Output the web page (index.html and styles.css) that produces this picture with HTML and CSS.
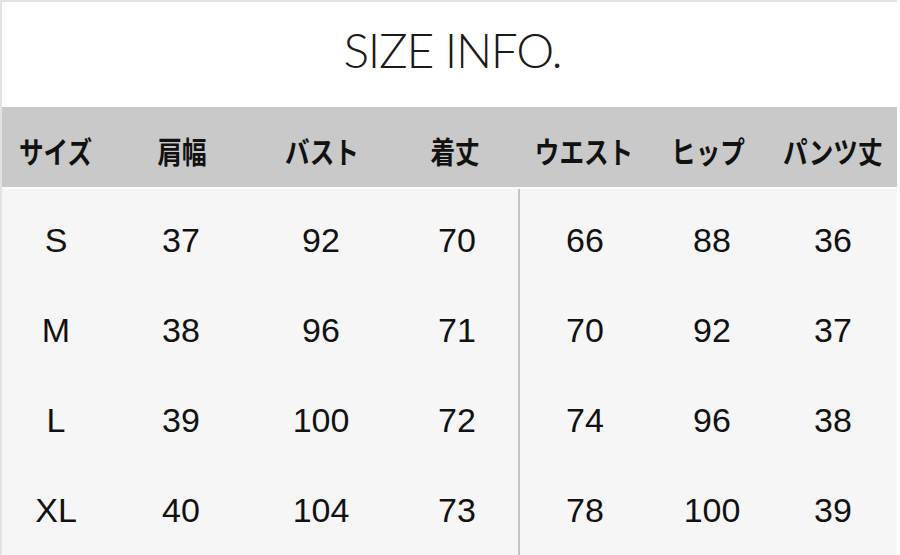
FILE: index.html
```html
<!DOCTYPE html>
<html lang="ja">
<head>
<meta charset="utf-8">
<title>SIZE INFO.</title>
<link rel="stylesheet" href="styles.css">
</head>
<body>
<div class="sheet">
  <div class="title"><h1>SIZE INFO.</h1></div>
  <div class="row head">
    <div class="cell"><span>サイズ</span></div>
    <div class="cell"><span>肩幅</span></div>
    <div class="cell"><span>バスト</span></div>
    <div class="cell"><span>着丈</span></div>
    <div class="cell"><span>ウエスト</span></div>
    <div class="cell"><span>ヒップ</span></div>
    <div class="cell"><span>パンツ丈</span></div>
  </div>
  <div class="body">
    <div class="row data">
      <div class="cell">S</div><div class="cell">37</div><div class="cell">92</div><div class="cell">70</div>
      <div class="cell split">66</div><div class="cell">88</div><div class="cell">36</div>
    </div>
    <div class="row data">
      <div class="cell">M</div><div class="cell">38</div><div class="cell">96</div><div class="cell">71</div>
      <div class="cell split">70</div><div class="cell">92</div><div class="cell">37</div>
    </div>
    <div class="row data">
      <div class="cell">L</div><div class="cell">39</div><div class="cell">100</div><div class="cell">72</div>
      <div class="cell split">74</div><div class="cell">96</div><div class="cell">38</div>
    </div>
    <div class="row data">
      <div class="cell">XL</div><div class="cell">40</div><div class="cell">104</div><div class="cell">73</div>
      <div class="cell split">78</div><div class="cell">100</div><div class="cell">39</div>
    </div>
  </div>
</div>
</body>
</html>
```

FILE: styles.css
```css
html, body {
  margin: 0;
  padding: 0;
  background: #ffffff;
}

body {
  width: 900px;
  height: 555px;
  overflow: hidden;
}

.sheet {
  width: 897px;
  height: 555px;
  border-top: 2px solid #e2e2e2;
  border-left: 2px solid #e2e2e2;
  box-sizing: border-box;
  display: flex;
  flex-direction: column;
}

.title {
  height: 106px;
  display: flex;
  justify-content: center;
  align-items: flex-start;
  background: #ffffff;
}

.title h1 {
  margin: 18px 0 0 0;
  font-family: Lato, "Open Sans", sans-serif;
  font-weight: 300;
  font-size: 48px;
  line-height: 60px;
  letter-spacing: -1.3px;
  color: #1a1a1a;
  padding-left: 6px;
}

.row {
  display: grid;
  grid-template-columns: 108px 140px 142px 126px 132px 124px 118px;
}

.head {
  height: 81px;
  background: #c9c9c9;
  align-items: center;
  border-bottom: 2px solid #fbfbfb;
}

.head .cell {
  display: flex;
  justify-content: center;
  font-family: "Noto Sans CJK JP", sans-serif;
  font-weight: 700;
  font-size: 30px;
  line-height: 36px;
  color: #111111;
  padding-top: 6px;
}

.head .cell:nth-child(2) {
  padding-left: 4px;
}

.head .cell:nth-child(3) {
  padding-left: 2px;
}

.head .cell:nth-child(6) {
  padding-right: 8px;
}

.head .cell span {
  display: inline-block;
  transform: scaleX(0.82);
  white-space: nowrap;
}

.body {
  flex: 1;
  background: #f6f6f6;
  padding-top: 6px;
}

.data {
  height: 90px;
}

.data .cell {
  display: flex;
  justify-content: center;
  align-items: center;
  font-family: "Liberation Sans", Arial, sans-serif;
  font-size: 34px;
  color: #111111;
}

.data .cell:nth-child(2) {
  padding-left: 2px;
}

.data .cell:nth-child(4) {
  padding-left: 4px;
}

.data .split {
  border-left: 2px solid #c4c4c4;
}

.data:first-child .split {
  margin-top: -6px;
  padding-top: 6px;
}
```
